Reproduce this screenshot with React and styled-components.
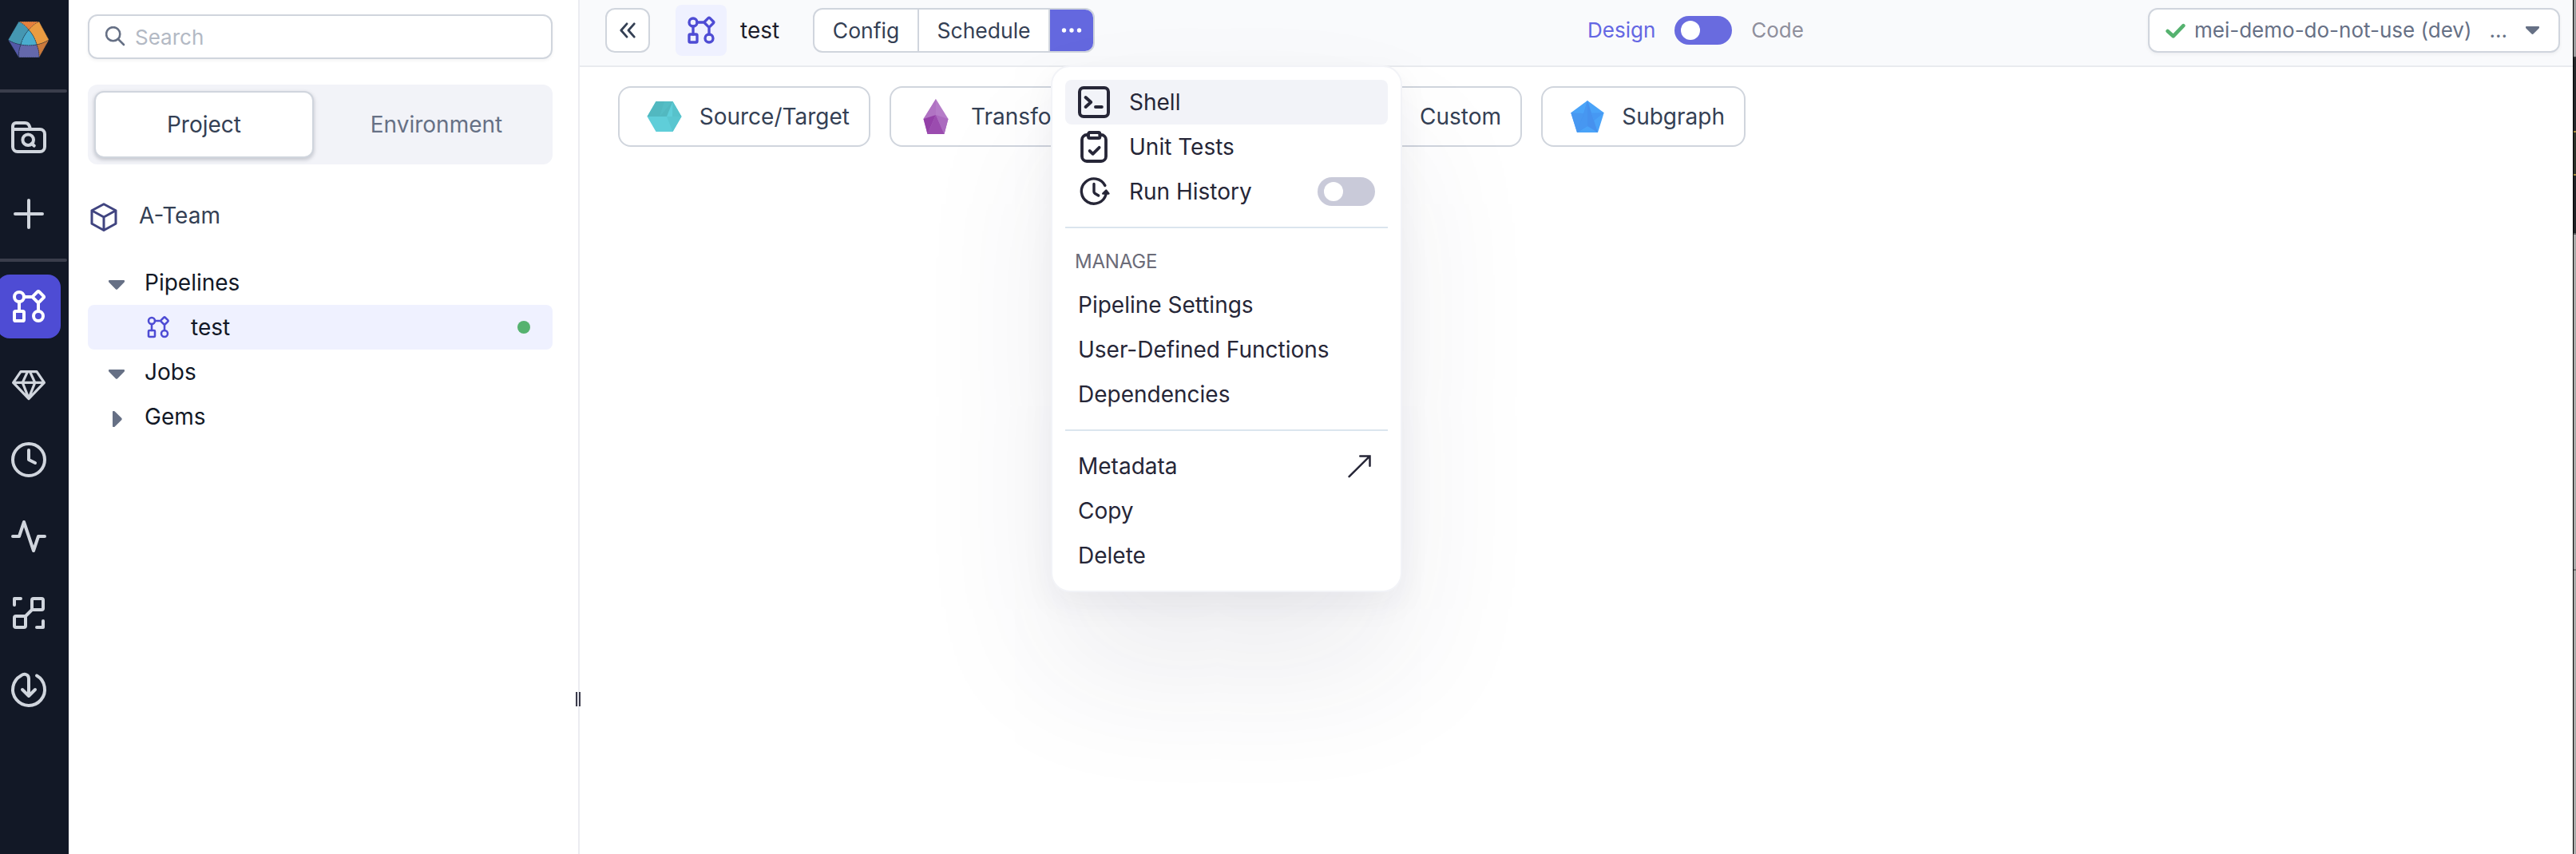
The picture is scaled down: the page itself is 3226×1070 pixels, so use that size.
import React from "react";
import styled, { createGlobalStyle } from "styled-components";

const Global = createGlobalStyle`
  *, *::before, *::after { box-sizing: border-box; }
  html, body { margin: 0; padding: 0; background: #fff; overflow: hidden; }
  body { font-family: Inter, "Liberation Sans", sans-serif; font-size: 28px; line-height: 40px; color: #121826; }
  svg { display: block; flex: none; }
`;

const Screen = styled.div`
  display: flex;
  width: 3226px;
  height: 1070px;
  overflow: hidden;
  background: #fff;
`;

/* ---------- navigation rail ---------- */
const Rail = styled.nav`
  display: flex;
  flex-direction: column;
  gap: 16px;
  width: 86px;
  flex: none;
  background: #121826;
  color: #d0d5dd;
`;
const RailLogo = styled.div`
  height: 96px;
  padding: 26px 0 0 9px;
`;
const RailRule = styled.div`
  width: 84px;
  height: 4px;
  border-radius: 0 2px 2px 0;
  background: #3a3d4b;
`;
const RailItem = styled.div`
  display: flex;
  align-items: center;
  justify-content: center;
  width: 80px;
  height: 80px;
  margin-left: -4px;
  border-radius: 16px;
  background: ${(p) => (p.$active ? "#4e4cd4" : "transparent")};
  color: ${(p) => (p.$active ? "#fff" : "inherit")};
`;

/* ---------- project panel ---------- */
const Panel = styled.aside`
  display: flex;
  flex-direction: column;
  width: 638px;
  flex: none;
  padding: 18px 32px 0 24px;
`;
const SearchBox = styled.div`
  display: flex;
  align-items: center;
  gap: 11px;
  height: 56px;
  padding: 0 20px;
  border: 2px solid #d0d5dd;
  border-radius: 12px;
  color: #667085;
  box-shadow: 0 2px 4px rgba(16, 24, 40, 0.05);
`;
const Placeholder = styled.span`
  padding-top: 1px;
  color: #b3b9c4;
  font-size: 26px;
`;
const Tabs = styled.div`
  display: flex;
  height: 100px;
  margin-top: 32px;
  padding: 8px;
  border-radius: 12px;
  background: #f2f3f8;
`;
const Tab = styled.div`
  display: flex;
  align-items: center;
  justify-content: center;
  flex: ${(p) => (p.$active ? "0 0 275px" : "1")};
  padding-left: ${(p) => (p.$active ? 0 : 16)}px;
  border: 2px solid ${(p) => (p.$active ? "#d0d5dd" : "transparent")};
  border-radius: 12px;
  background: ${(p) => (p.$active ? "#fff" : "transparent")};
  color: ${(p) => (p.$active ? "#344054" : "#667085")};
  box-shadow: ${(p) => (p.$active ? "0 2px 4px rgba(16,24,40,.12), 0 2px 6px rgba(16,24,40,.1)" : "none")};
`;
const Team = styled.div`
  display: flex;
  align-items: center;
  gap: 24px;
  height: 56px;
  margin-top: 36px;
  color: #344054;
  svg { margin-top: 4px; }
`;
const Tree = styled.div`
  display: flex;
  flex-direction: column;
  margin-top: 28px;
`;
const TreeRow = styled.div`
  display: flex;
  align-items: center;
  height: 56px;
  padding-left: ${(p) => (p.$child ? 72 : 26)}px;
  padding-right: 28px;
  gap: 25px;
  border-radius: 8px;
  background: ${(p) => (p.$child ? "#eff1ff" : "transparent")};
`;
const CaretBox = styled.span`
  display: flex;
  color: #667085;
  padding-top: 6px;
`;
const TreeIcon = styled.span`
  display: flex;
  color: #4e4cd4;
`;
const StatusDot = styled.span`
  width: 16px;
  height: 16px;
  margin-left: auto;
  border-radius: 50%;
  background: #55b26f;
`;

/* ---------- split bar ---------- */
const Split = styled.div`
  position: relative;
  width: 2px;
  flex: none;
  background: #ebecf1;
`;
const Grip = styled.div`
  position: absolute;
  z-index: 2;
  left: -3px;
  top: 867px;
  width: 6px;
  height: 18px;
  border: solid #3b3b4b;
  border-width: 0 2px;
  background: #e7e8ee;
`;

/* ---------- workspace ---------- */
const Workspace = styled.main`
  display: flex;
  flex-direction: column;
  flex: 1;
  min-width: 0;
  background: #fff;
`;
const Header = styled.header`
  display: flex;
  align-items: flex-start;
  height: 84px;
  padding: 6px 16px 0 32px;
  border-bottom: 2px solid #e9ebef;
  background: #f9fafc;
`;
const CollapseButton = styled.div`
  display: flex;
  align-items: center;
  justify-content: center;
  width: 56px;
  height: 56px;
  margin-top: 4px;
  border: 2px solid #d0d5dd;
  border-radius: 12px;
  background: #fff;
  color: #344054;
`;
const PipelineTile = styled.div`
  display: flex;
  align-items: center;
  justify-content: center;
  width: 64px;
  height: 64px;
  margin-left: 32px;
  border-radius: 8px;
  background: #eff1ff;
  color: #4e4cd4;
`;
const Title = styled.div`
  width: 91px;
  margin: 12px 0 0 17px;
  color: #1d1d2b;
`;
const ButtonGroup = styled.div`
  position: relative;
  display: flex;
  width: 353px;
  height: 56px;
  margin-top: 4px;
  border: 2px solid #d0d5dd;
  border-radius: 12px;
  background: #fff;
  color: #344054;
`;
const GroupButton = styled.div`
  display: flex;
  align-items: center;
  justify-content: center;
  width: ${(p) => p.$w}px;
  border-right: 2px solid #d0d5dd;
  font-size: 26.5px;
`;
const MoreButton = styled.div`
  display: flex;
  align-items: center;
  justify-content: center;
  flex: 1;
  border-radius: 0 10px 10px 0;
  background: #6468df;
  color: #fff;
`;
const ModeSwitch = styled.div`
  display: flex;
  align-items: center;
  gap: 24px;
  height: 56px;
  margin: 4px 0 0 617px;
  font-size: 26px;
`;
const ModeLabel = styled.span`
  color: ${(p) => (p.$on ? "#6467e3" : "#8f8f9c")};
`;
const Toggle = styled.span`
  display: flex;
  width: 72px;
  height: 36px;
  padding: 6px 8px;
  border-radius: 18px;
  background: ${(p) => p.$color};
  &::before {
    content: "";
    width: 24px;
    height: 24px;
    border-radius: 50%;
    background: #fff;
  }
`;
const Cluster = styled.div`
  display: flex;
  align-items: center;
  width: 516px;
  height: 56px;
  margin: 4px 0 0 auto;
  padding: 0 24px 0 20px;
  border: 2px solid #d0d5dd;
  border-radius: 12px;
  background: #fff;
  color: #667085;
  font-size: 26px;
  box-shadow: 0 2px 4px rgba(16, 24, 40, 0.05);
`;
const ClusterName = styled.span`
  margin-left: 11px;
  white-space: nowrap;
`;
const Ellipsis = styled.span`
  margin: 0 auto 0 22px;
`;

const GemBar = styled.div`
  display: flex;
  justify-content: space-between;
  width: 1412px;
  margin: 24px 0 0 48px;
`;
const GemGroup = styled.div`
  display: flex;
  gap: 24px;
`;
const GemCard = styled.div`
  display: flex;
  align-items: center;
  justify-content: space-between;
  width: ${(p) => p.$w}px;
  height: 76px;
  padding: 0 24px 0 ${(p) => p.$inset}px;
  border: 2px solid #d0d5dd;
  border-radius: 16px;
  background: #fff;
  color: #344054;
`;

/* ---------- drop-down menu ---------- */
const Menu = styled.div`
  position: absolute;
  z-index: 5;
  top: 70px;
  left: 296px;
  width: 440px;
  padding: 16px;
  border: 2px solid #f2f3f7;
  border-radius: 24px;
  background: #fff;
  color: #262637;
  box-shadow:
    0 96px 176px rgba(40, 40, 75, 0.09),
    0 16px 40px rgba(40, 40, 75, 0.05);
`;
const MenuItem = styled.div`
  display: flex;
  align-items: center;
  height: 56px;
  padding: 0 16px 0 ${(p) => (p.$icon ? 12 : 16)}px;
  gap: 20px;
  border-radius: 8px;
  background: ${(p) => (p.$hover ? "#f2f3f8" : "transparent")};
  white-space: nowrap;
`;
const MenuEnd = styled.span`
  display: flex;
  margin-left: auto;
  padding-right: ${(p) => p.$pad || 0}px;
`;
const MenuRule = styled.div`
  height: 2px;
  margin: 16px 0;
  background: #dbe5ee;
`;
const MenuHeading = styled.div`
  height: 52px;
  padding-left: 12px;
  color: #6b6b78;
  font-size: 24px;
  line-height: 52px;
  letter-spacing: -0.2px;
`;

/* ---------- neighbouring window ---------- */
const Edge = styled.div`
  display: flex;
  flex-direction: column;
  width: 4px;
  flex: none;
  border-left: 1px solid #000;
`;
const EdgeBand = styled.div`
  height: ${(p) => p.$h}px;
  background: ${(p) => p.$c};
`;

/* ---------- icons ---------- */
const Line = ({ size = 48, sw = 2, children }) => (
  <svg width={size} height={size} viewBox="0 0 24 24" fill="none" stroke="currentColor" strokeWidth={sw} strokeLinecap="round" strokeLinejoin="round">
    {children}
  </svg>
);
const PipelineIcon = ({ size, sw }) => (
  <Line size={size} sw={sw}>
    <circle cx="6" cy="6" r="3" />
    <circle cx="18" cy="18" r="3" />
    <rect x="3" y="15" width="6" height="6" rx="0.8" />
    <path d="M17.4 2.8a.85.85 0 0 1 1.2 0l2.6 2.6a.85.85 0 0 1 0 1.2l-2.6 2.6a.85.85 0 0 1-1.2 0l-2.6-2.6a.85.85 0 0 1 0-1.2zM9 6h5.4M6 9v6M18 9.6V15" />
  </Line>
);
const FolderSearchIcon = () => (
  <Line>
    <path d="M2 7V5a2 2 0 0 1 2-2h5.500C12 3 12.500 4.800 13 7M2 7h17a3 3 0 0 1 3 3v8a3 3 0 0 1-3 3H5a3 3 0 0 1-3-3z" />
    <circle cx="11.600" cy="13.600" r="3.400" />
    <path d="M13.800 16l1.600 1.300" />
  </Line>
);
const PlusIcon = () => (
  <Line>
    <path d="M12 3.500v17M3.500 12h17" />
  </Line>
);
const GemIcon = () => (
  <Line sw={1.6}>
    <path d="M7 4.800h10l4.700 6.900L12 21.800 2.300 11.700zM2.300 11.700h19.400M11.300 4.800l-3.200 6.900L12 21.500l3.900-9.800-3.200-6.900" />
  </Line>
);
const ClockIcon = () => (
  <Line>
    <circle cx="12" cy="12" r="10" />
    <path d="M12 6v6l4 2" />
  </Line>
);
const PulseIcon = () => (
  <Line>
    <path d="M22 12h-4l-3 9L9 3l-3 9H2" />
  </Line>
);
const LineageIcon = () => (
  <Line>
    <rect x="14" y="3" width="7" height="7" rx="1" />
    <rect x="3" y="14" width="7" height="7" rx="1" />
    <path d="M3 7V3h4M21 17v4h-4M10 14l4-4" />
  </Line>
);
const DownloadIcon = () => (
  <Line>
    <path d="M17 3.300A10 10 0 1 1 7.200 3.200C9.500 1.700 12 2.500 12 5.200V16M8 12l4 4 4-4" />
  </Line>
);
const LogoIcon = () => (
  <svg width="53" height="48" viewBox="9 26 53 48" stroke="#1d2a3a" strokeWidth="0.6" strokeDasharray="1.500 1">
    <path fill="#e5803c" d="M23.500 27h25.500L36 37.500z" />
    <path fill="#4597b2" d="M23.500 27Q31 30.500 36 37.500Q29 45 26 56Q17 54.500 10.200 50z" />
    <path fill="#ea9c42" d="M49 27l12.300 23Q54 54.500 46 56Q43 45 36 37.500Q41.500 30.500 49 27z" />
    <path fill="#4aadcf" d="M36 37.500Q43 45 46 56Q36 58 26 56Q29 45 36 37.500z" />
    <path fill="#5358a6" d="M10.200 50Q17 54.500 26 56Q23 64 23.500 72z" />
    <path fill="#6468ab" d="M26 56Q36 58 46 56Q49.500 64 49 72H23.500Q23 64 26 56z" />
    <path fill="#cb7a3c" d="M46 56Q54 54.500 61.300 50L49 72Q49.500 64 46 56z" />
  </svg>
);
const SearchIcon = () => (
  <svg width="26" height="26" viewBox="0 0 26 26" fill="none" stroke="currentColor" strokeWidth="2.600" strokeLinecap="round">
    <circle cx="9.700" cy="9.700" r="8.600" />
    <path d="M16 16l7 7" />
  </svg>
);
const CubeIcon = () => (
  <svg width="40" height="40" viewBox="0 0 40 40" fill="none" stroke="#404480" strokeWidth="3" strokeLinecap="round" strokeLinejoin="round">
    <path d="M20 3.700l15 8.100v16.500L20 36.500 5 28.300V11.800zM5 11.800l15 8.200 15-8.200M20 20v16.500" />
  </svg>
);
const CaretDown = ({ w = 20 }) => (
  <svg width={w} height={w * 0.6} viewBox="0 0 20 12" fill="currentColor">
    <path d="M1 0h18q1 0 1 .8v1q0 .5-.5 1L11.200 11.200q-1.200 1.200-2.400 0L.5 2.800Q0 2.300 0 1.800v-1Q0 0 1 0z" />
  </svg>
);
const CaretRight = () => (
  <svg width="20" height="20" viewBox="-5 0 20 20" fill="currentColor">
    <path d="M0 1v18q0 1 .8 1h1q.5 0 1-.5l8.400-8.300q1.200-1.200 0-2.400L2.800.5Q2.300 0 1.800 0h-1Q0 0 0 1z" />
  </svg>
);
const CollapseIcon = () => (
  <svg width="20" height="20" viewBox="0 0 20 20" fill="none" stroke="currentColor" strokeWidth="2.800" strokeLinecap="round" strokeLinejoin="round">
    <path d="M9 1.800L1.800 10 9 18.200M18.200 1.800L11 10l7.200 8.200" />
  </svg>
);
const DotsIcon = () => (
  <svg width="26" height="6" viewBox="0 0 26 6" fill="currentColor">
    <circle cx="3.500" cy="3" r="2.700" />
    <circle cx="13" cy="3" r="2.700" />
    <circle cx="22.500" cy="3" r="2.700" />
  </svg>
);
const CheckIcon = () => (
  <svg width="25" height="19" viewBox="0 0 25 19" fill="none" stroke="#55b26f" strokeWidth="4.600" strokeLinecap="round" strokeLinejoin="round">
    <path d="M2.600 10l7 6.300L22.300 3.200" />
  </svg>
);
const ShellIcon = () => (
  <Line>
    <rect x="3" y="3" width="18" height="18" rx="2.500" />
    <path d="M6.800 9l3.300 3-3.300 3M13 15h3.900" />
  </Line>
);
const ClipboardIcon = () => (
  <Line sw={1.9}>
    <rect x="8.500" y="3" width="7.200" height="3.500" rx="0.8" />
    <path d="M15.700 4.500h.8a3 3 0 0 1 3 3V18a3 3 0 0 1-3 3h-9a3 3 0 0 1-3-3V7.500a3 3 0 0 1 3-3h1M9.300 14.500l2 1.900 4-4" />
  </Line>
);
const HistoryIcon = () => (
  <Line sw={1.7}>
    <path d="M18.900 8.200A7.800 7.800 0 1 0 19.500 13.800M12 7.200v4.900q0 .6.5 1l2.300 1.400" />
    <path d="M17.600 13.300l2-2 1.600 2z" fill="currentColor" strokeWidth="1.200" />
  </Line>
);
const ArrowUpRight = () => (
  <svg width="29" height="29" viewBox="0 0 29 29" fill="none" stroke="currentColor" strokeWidth="2.500" strokeLinecap="round">
    <path d="M1.600 27.200L27 1.900M15.300 1.500h12.200v12.200" />
  </svg>
);
const SourceGem = () => (
  <svg width="44" height="40" viewBox="0 0 44 40">
    <path fill="#5fced9" d="M11.500 1h21L43.500 20 32.500 39h-21L.5 20z" />
    <path fill="#52b8c0" d="M11.500 1h21L25 20H.5z" />
    <path fill="#57c2cb" d="M32.500 1l11 19H32z" />
    <path fill="#55bdc5" d="M22 1h10.500L16 20z" />
    <path fill="#59c6d0" d="M25 20h18.500L32.500 39z" />
  </svg>
);
const TransformGem = () => (
  <svg width="32" height="44" viewBox="0 0 32 44">
    <path fill="#b57cc8" d="M16 0l15.500 25-5 19h-21L.5 25z" />
    <path fill="#b073c3" d="M16 0v20L.5 25z" />
    <path fill="#9440a8" d="M.5 25L16 20 5.500 44z" />
    <path fill="#9b4caf" d="M16 20l10.500 24h-21z" />
    <path fill="#ab6bbf" d="M16 20l15.500 5-5 19z" />
  </svg>
);
const CustomGem = () => (
  <svg width="44" height="40" viewBox="0 0 44 40">
    <path fill="#f0a04b" d="M22 1l21 19-21 19L1 20z" />
  </svg>
);
const SubgraphGem = () => (
  <svg width="42" height="40" viewBox="0 0 42 40">
    <path fill="#4aa3f8" d="M21 0l20.700 15.200L34 40H8L.3 15.200z" />
    <path fill="#4898f1" d="M.3 15.200L17 16l-4 13-5 11z" />
    <path fill="#4691ee" d="M21 0l5 15.500L34 40 21 32 8 40l8.500-24.500z" />
    <path fill="#4797f1" d="M21 0v32L8 40l8.500-24.500z" />
    <path fill="#4698f3" d="M25.500 15.500l16.200-.3L29.500 25z" />
  </svg>
);

export default function App() {
  return (
    <>
      <Global />
      <Screen>
        <Rail>
          <RailLogo><LogoIcon /></RailLogo>
          <RailRule />
          <RailItem><FolderSearchIcon /></RailItem>
          <RailItem><PlusIcon /></RailItem>
          <RailRule />
          <RailItem $active><PipelineIcon /></RailItem>
          <RailItem><GemIcon /></RailItem>
          <RailItem><ClockIcon /></RailItem>
          <RailItem><PulseIcon /></RailItem>
          <RailItem><LineageIcon /></RailItem>
          <RailItem><DownloadIcon /></RailItem>
        </Rail>

        <Panel>
          <SearchBox>
            <SearchIcon />
            <Placeholder>Search</Placeholder>
          </SearchBox>
          <Tabs>
            <Tab $active>Project</Tab>
            <Tab>Environment</Tab>
          </Tabs>
          <Team><CubeIcon />A-Team</Team>
          <Tree>
            <TreeRow><CaretBox><CaretDown /></CaretBox>Pipelines</TreeRow>
            <TreeRow $child>
              <TreeIcon><PipelineIcon size={32} sw={1.9} /></TreeIcon>
              test
              <StatusDot />
            </TreeRow>
            <TreeRow><CaretBox><CaretDown /></CaretBox>Jobs</TreeRow>
            <TreeRow><CaretBox><CaretRight /></CaretBox>Gems</TreeRow>
          </Tree>
        </Panel>

        <Split><Grip /></Split>

        <Workspace>
          <Header>
            <CollapseButton><CollapseIcon /></CollapseButton>
            <PipelineTile><PipelineIcon size={40} /></PipelineTile>
            <Title>test</Title>
            <ButtonGroup>
              <GroupButton $w={131}>Config</GroupButton>
              <GroupButton $w={164}>Schedule</GroupButton>
              <MoreButton><DotsIcon /></MoreButton>
              <Menu>
                <MenuItem $icon $hover><ShellIcon />Shell</MenuItem>
                <MenuItem $icon><ClipboardIcon />Unit Tests</MenuItem>
                <MenuItem $icon>
                  <HistoryIcon />Run History
                  <MenuEnd><Toggle $color="#c9cad9" /></MenuEnd>
                </MenuItem>
                <MenuRule />
                <MenuHeading>MANAGE</MenuHeading>
                <MenuItem>Pipeline Settings</MenuItem>
                <MenuItem>User-Defined Functions</MenuItem>
                <MenuItem>Dependencies</MenuItem>
                <MenuRule />
                <MenuItem>Metadata<MenuEnd $pad={5}><ArrowUpRight /></MenuEnd></MenuItem>
                <MenuItem>Copy</MenuItem>
                <MenuItem>Delete</MenuItem>
              </Menu>
            </ButtonGroup>
            <ModeSwitch>
              <ModeLabel $on>Design</ModeLabel>
              <Toggle $color="#696bdf" />
              <ModeLabel>Code</ModeLabel>
            </ModeSwitch>
            <Cluster>
              <CheckIcon />
              <ClusterName>mei-demo-do-not-use (dev)</ClusterName>
              <Ellipsis>...</Ellipsis>
              <CaretDown w={17} />
            </Cluster>
          </Header>
          <GemBar>
            <GemGroup>
              <GemCard $w={316} $inset={34}><SourceGem />Source/Target</GemCard>
              <GemCard $w={264} $inset={40}><TransformGem />Transform</GemCard>
            </GemGroup>
            <GemGroup>
              <GemCard $w={230} $inset={32}><CustomGem />Custom</GemCard>
              <GemCard $w={256} $inset={35}><SubgraphGem />Subgraph</GemCard>
            </GemGroup>
          </GemBar>
        </Workspace>

        <Edge>
          <EdgeBand $h={71} $c="#9b9d9f" />
          <EdgeBand $h={2} $c="#333537" />
          <EdgeBand $h={91} $c="#25282b" />
          <EdgeBand $h={2} $c="#a8903f" />
          <EdgeBand $h={52} $c="#2b302a" />
          <EdgeBand $h={2} $c="#a8903f" />
          <EdgeBand $h={72} $c="#1f2226" />
          <EdgeBand $h={2} $c="#55585a" />
          <EdgeBand $h={419} $c="#a9a9a9" />
          <EdgeBand $h={2} $c="#6f6f6f" />
          <EdgeBand $h={355} $c="#a9a9a9" />
        </Edge>
      </Screen>
    </>
  );
}
